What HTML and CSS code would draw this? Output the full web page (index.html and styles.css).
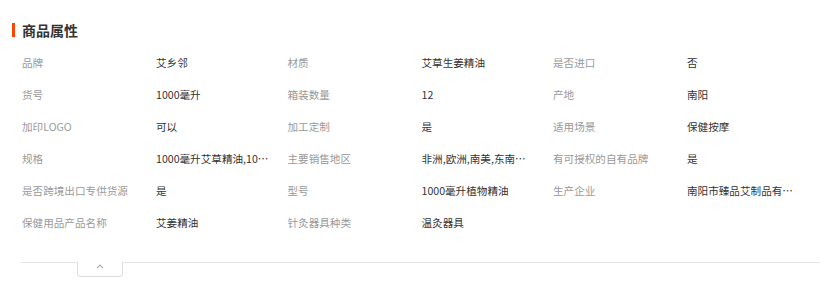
FILE: index.html
```html
<!DOCTYPE html>
<html lang="zh-CN">
<head>
    <meta charset="UTF-8">
    <meta name="viewport" content="width=device-width, initial-scale=1.0">
    <title>商品属性</title>
    <link rel="stylesheet" href="styles.css">
</head>
<body>
    <div class="attrs">
        <h3 class="attrs-title">商品属性</h3>
        <div class="attrs-list">
            <div class="attr"><span class="attr-name">品牌</span><span class="attr-value">艾乡邻</span></div>
            <div class="attr"><span class="attr-name">材质</span><span class="attr-value">艾草生姜精油</span></div>
            <div class="attr"><span class="attr-name">是否进口</span><span class="attr-value">否</span></div>

            <div class="attr"><span class="attr-name">货号</span><span class="attr-value">1000毫升</span></div>
            <div class="attr"><span class="attr-name">箱装数量</span><span class="attr-value">12</span></div>
            <div class="attr"><span class="attr-name">产地</span><span class="attr-value">南阳</span></div>

            <div class="attr"><span class="attr-name">加印LOGO</span><span class="attr-value">可以</span></div>
            <div class="attr"><span class="attr-name">加工定制</span><span class="attr-value">是</span></div>
            <div class="attr"><span class="attr-name">适用场景</span><span class="attr-value">保健按摩</span></div>

            <div class="attr"><span class="attr-name">规格</span><span class="attr-value">1000毫升艾草精油,1000毫升生姜精油</span></div>
            <div class="attr"><span class="attr-name">主要销售地区</span><span class="attr-value">非洲,欧洲,南美,东南亚,北美</span></div>
            <div class="attr"><span class="attr-name">有可授权的自有品牌</span><span class="attr-value">是</span></div>

            <div class="attr"><span class="attr-name">是否跨境出口专供货源</span><span class="attr-value">是</span></div>
            <div class="attr"><span class="attr-name">型号</span><span class="attr-value">1000毫升植物精油</span></div>
            <div class="attr"><span class="attr-name">生产企业</span><span class="attr-value">南阳市臻品艾制品有限公司</span></div>

            <div class="attr"><span class="attr-name">保健用品产品名称</span><span class="attr-value">艾姜精油</span></div>
            <div class="attr"><span class="attr-name">针灸器具种类</span><span class="attr-value">温灸器具</span></div>
        </div>
        <div class="attrs-foot">
            <button class="fold-btn" type="button">
                <svg width="8" height="5" viewBox="0 0 8 5">
                    <polyline points="1,4.2 4,1.2 7,4.2" fill="none" stroke="#a9adb5" stroke-width="1.2"/>
                </svg>
            </button>
        </div>
    </div>
</body>
</html>
```

FILE: styles.css
```css
body {
    margin: 0;
    padding: 0;
    background-color: #fff;
    font-family: "Noto Sans CJK SC", "Noto Sans", Arial, sans-serif;
}

.attrs {
    padding: 23px 0 0 12px;
}

.attrs-title {
    margin: 0;
    padding-left: 7px;
    border-left: 3px solid #ff4400;
    height: 14px;
    line-height: 14px;
    font-size: 14px;
    font-weight: bold;
    color: #333;
}

.attrs-list {
    display: grid;
    grid-template-columns: repeat(3, 265.5px);
    grid-auto-rows: 32px;
    margin: 9px 0 0 10px;
}

.attr {
    display: flex;
    align-items: center;
    min-width: 0;
    font-size: 10.6px;
}

.attr-name {
    flex: none;
    width: 134px;
    color: #999;
    white-space: nowrap;
}

.attr-value {
    max-width: 114px;
    color: #333;
    white-space: nowrap;
    overflow: hidden;
    text-overflow: ellipsis;
}

.attrs-foot {
    margin: 24px 17px 0 9px;
    border-top: 1px solid #e5e5e5;
}

.fold-btn {
    display: flex;
    align-items: flex-start;
    justify-content: center;
    width: 46px;
    height: 15px;
    margin: -1px 0 0 56px;
    padding: 2px 0 0;
    background-color: #fff;
    border: 1px solid #ddd;
    border-top: none;
    border-radius: 0 0 4px 4px;
    cursor: pointer;
}
```
